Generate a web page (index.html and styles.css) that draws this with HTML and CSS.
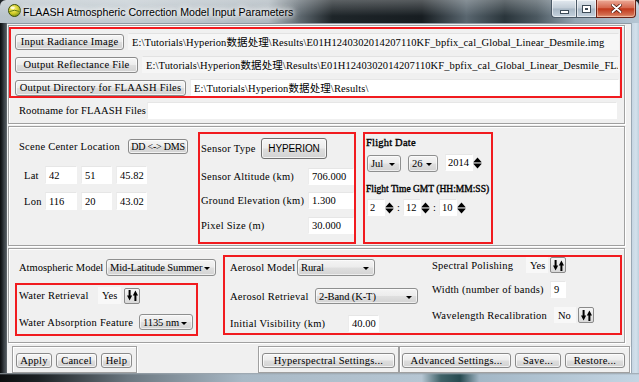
FILE: index.html
```html
<!DOCTYPE html>
<html lang="zh-CN">
<head>
  <meta charset="UTF-8">
  <title>FLAASH Atmospheric Correction Model Input Parameters</title>
  <link rel="stylesheet" href="styles.css">
</head>
<body>
  <div class="window">
    <div class="titlebar">
      <svg class="app-icon" width="13" height="13" viewBox="0 0 13 13">
        <defs>
          <radialGradient id="globe" cx="0.4" cy="0.35" r="0.7">
            <stop offset="0" stop-color="#fbf58a"/>
            <stop offset="0.55" stop-color="#d6cf2a"/>
            <stop offset="1" stop-color="#6f8a14"/>
          </radialGradient>
        </defs>
        <circle cx="6.5" cy="6.5" r="6" fill="url(#globe)" stroke="#3c4f0c" stroke-width="1"/>
        <path d="M1.5 7.5 Q6.5 5 11.5 7.5" fill="none" stroke="#5f7a12" stroke-width="1"/>
        <ellipse cx="4.6" cy="3.8" rx="2.2" ry="1.3" fill="#fff" opacity="0.75"/>
      </svg>
      <span class="title">FLAASH Atmospheric Correction Model Input Parameters</span>
      <div class="caption">
        <span class="cap cap-min"><i class="glyph-min"></i></span>
        <span class="cap cap-max"><i class="glyph-max"></i></span>
        <span class="cap cap-close">
          <svg width="11" height="9" viewBox="0 0 11 9">
            <path d="M1.5 1 L9.5 8 M9.5 1 L1.5 8" stroke="#4a1408" stroke-width="3.4" stroke-linecap="round"/>
            <path d="M1.5 1 L9.5 8 M9.5 1 L1.5 8" stroke="#fff" stroke-width="1.9" stroke-linecap="round"/>
          </svg>
        </span>
      </div>
    </div>

    <div class="frame-left"></div>

    <div class="client">
      <section class="panel panel-files">
        <div class="mark mark-files">
          <div class="file-row">
            <button class="btn btn-input">Input Radiance Image</button>
            <div class="field path readonly">E:\Tutorials\Hyperion数据处理\Results\E01H1240302014207110KF_bpfix_cal_Global_Linear_Desmile.img</div>
          </div>
          <div class="file-row">
            <button class="btn btn-output">Output Reflectance File</button>
            <div class="field path readonly">E:\Tutorials\Hyperion数据处理\Results\E01H1240302014207110KF_bpfix_cal_Global_Linear_Desmile_FLAASH.img</div>
          </div>
          <div class="file-row">
            <button class="btn btn-dir">Output Directory for FLAASH Files</button>
            <div class="field path">E:\Tutorials\Hyperion数据处理\Results\</div>
          </div>
        </div>
        <div class="root-row">
          <span class="lbl root-lbl">Rootname for FLAASH Files</span>
          <div class="field root-field"></div>
        </div>
      </section>

      <section class="panel panel-scene">
        <div class="scene">
          <div class="scene-head">
            <span class="lbl scene-lbl">Scene Center Location</span>
            <button class="btn btn-dms">DD &lt;-&gt; DMS</button>
          </div>
          <div class="coord-row">
            <span class="lbl coord-lbl">Lat</span>
            <div class="field coord wide">42</div>
            <div class="field coord">51</div>
            <div class="field coord">45.82</div>
          </div>
          <div class="coord-row lon">
            <span class="lbl coord-lbl">Lon</span>
            <div class="field coord wide">116</div>
            <div class="field coord">20</div>
            <div class="field coord">43.02</div>
          </div>
        </div>

        <div class="mark mark-sensor">
          <div class="sensor-row type-row">
            <span class="lbl sensor-lbl">Sensor Type</span>
            <button class="btn btn-sensor">HYPERION</button>
          </div>
          <div class="sensor-row alt-row">
            <span class="lbl">Sensor Altitude (km)</span>
            <div class="field num">706.000</div>
          </div>
          <div class="sensor-row elev-row">
            <span class="lbl">Ground Elevation (km)</span>
            <div class="field num">1.300</div>
          </div>
          <div class="sensor-row pixel-row">
            <span class="lbl">Pixel Size (m)</span>
            <div class="field num">30.000</div>
          </div>
        </div>

        <div class="mark mark-flight">
          <div class="flight-title">Flight Date</div>
          <div class="date-row">
            <div class="combo combo-month">Jul</div>
            <div class="combo combo-day">26</div>
            <div class="spin spin-year">
              <span class="field spin-field">2014</span>
              <svg class="spin-arrows" width="9" height="14" viewBox="0 0 9 14"><path d="M0.5 6 L4.5 1.5 L8.5 6 Z M0.5 8 L8.5 8 L4.5 12.5 Z" fill="#000"/><rect x="0.5" y="6.6" width="8" height="0.9" fill="#000"/></svg>
            </div>
          </div>
          <div class="flight-title time-title">Flight Time GMT (HH:MM:SS)</div>
          <div class="time-row">
            <div class="spin">
              <span class="field spin-field">2</span>
              <svg class="spin-arrows" width="9" height="14" viewBox="0 0 9 14"><path d="M0.5 6 L4.5 1.5 L8.5 6 Z M0.5 8 L8.5 8 L4.5 12.5 Z" fill="#000"/><rect x="0.5" y="6.6" width="8" height="0.9" fill="#000"/></svg>
            </div>
            <span class="colon">:</span>
            <div class="spin">
              <span class="field spin-field">12</span>
              <svg class="spin-arrows" width="9" height="14" viewBox="0 0 9 14"><path d="M0.5 6 L4.5 1.5 L8.5 6 Z M0.5 8 L8.5 8 L4.5 12.5 Z" fill="#000"/><rect x="0.5" y="6.6" width="8" height="0.9" fill="#000"/></svg>
            </div>
            <span class="colon">:</span>
            <div class="spin">
              <span class="field spin-field">10</span>
              <svg class="spin-arrows" width="9" height="14" viewBox="0 0 9 14"><path d="M0.5 6 L4.5 1.5 L8.5 6 Z M0.5 8 L8.5 8 L4.5 12.5 Z" fill="#000"/><rect x="0.5" y="6.6" width="8" height="0.9" fill="#000"/></svg>
            </div>
          </div>
        </div>
      </section>

      <section class="panel panel-atmos">
        <div class="atmos-left">
          <div class="atmos-row">
            <span class="lbl atmos-lbl">Atmospheric Model</span>
            <div class="combo combo-model">Mid-Latitude Summer</div>
          </div>
          <div class="mark mark-water">
            <div class="water-row retrieval-row">
              <span class="lbl water-lbl">Water Retrieval</span>
              <div class="flag">Yes</div>
              <button class="toggle">
                <svg width="11" height="11" viewBox="0 0 11 11"><path d="M1.6 0 H3.6 V5.5 H5.2 L2.6 10.5 L0 5.5 H1.6 Z M7.4 11 H9.4 V5.5 H11 L8.4 0.5 L5.8 5.5 H7.4 Z" fill="#000"/></svg>
              </button>
            </div>
            <div class="water-row feature-row">
              <span class="lbl feature-lbl">Water Absorption Feature</span>
              <div class="combo combo-feature">1135 nm</div>
            </div>
          </div>
        </div>

        <div class="mark mark-aerosol">
          <div class="aerosol-col">
            <div class="aero-row model-row">
              <span class="lbl lbl-model">Aerosol Model</span>
              <div class="combo combo-rural">Rural</div>
            </div>
            <div class="aero-row retr-row">
              <span class="lbl lbl-retr">Aerosol Retrieval</span>
              <div class="combo combo-band">2-Band (K-T)</div>
            </div>
            <div class="aero-row vis-row">
              <span class="lbl lbl-vis">Initial Visibility (km)</span>
              <div class="field vis">40.00</div>
            </div>
          </div>
          <div class="aerosol-col polish-col">
            <div class="aero-row polish-row">
              <span class="lbl lbl-polish">Spectral Polishing</span>
              <div class="flag">Yes</div>
              <button class="toggle">
                <svg width="11" height="11" viewBox="0 0 11 11"><path d="M1.6 0 H3.6 V5.5 H5.2 L2.6 10.5 L0 5.5 H1.6 Z M7.4 11 H9.4 V5.5 H11 L8.4 0.5 L5.8 5.5 H7.4 Z" fill="#000"/></svg>
              </button>
            </div>
            <div class="aero-row width-row">
              <span class="lbl lbl-width">Width (number of bands)</span>
              <div class="field bands">9</div>
            </div>
            <div class="aero-row recal-row">
              <span class="lbl lbl-recal">Wavelength Recalibration</span>
              <div class="flag">No</div>
              <button class="toggle">
                <svg width="11" height="11" viewBox="0 0 11 11"><path d="M1.6 0 H3.6 V5.5 H5.2 L2.6 10.5 L0 5.5 H1.6 Z M7.4 11 H9.4 V5.5 H11 L8.4 0.5 L5.8 5.5 H7.4 Z" fill="#000"/></svg>
              </button>
            </div>
          </div>
        </div>
      </section>

      <div class="actions">
        <div class="group group-main">
          <button class="btn btn-apply">Apply</button>
          <button class="btn btn-cancel">Cancel</button>
          <button class="btn btn-help">Help</button>
        </div>
        <div class="group group-hyper">
          <button class="btn btn-hyper">Hyperspectral Settings...</button>
        </div>
        <div class="group group-adv">
          <button class="btn btn-adv">Advanced Settings...</button>
          <button class="btn btn-save">Save...</button>
          <button class="btn btn-restore">Restore...</button>
        </div>
      </div>
    </div>

    <div class="frame-right"></div>
    <div class="frame-bottom"></div>
  </div>
</body>
</html>
```

FILE: styles.css
```css
* {
  box-sizing: border-box;
}
body {
  margin: 0;
  background: #1f2529;
  font-family: "Liberation Serif", "Noto Sans CJK SC", serif;
  font-size: 10.5px;
  color: #000;
}
.window {
  width: 639px;
  height: 382px;
  display: grid;
  grid-template-columns: 7px 624px 8px;
  grid-template-rows: 23px 350px 9px;
  overflow: hidden;
}

/* window chrome */
.titlebar {
  grid-column: 1 / 4;
  display: flex;
  align-items: center;
  padding-left: 8px;
  border-radius: 6px 6px 0 0;
  background:
    linear-gradient(180deg, rgba(255,255,255,0.28), rgba(255,255,255,0) 70%),
    linear-gradient(90deg, #b9c3ca 0, #c3ccd2 20%, #aeb8bf 42%, #5d676e 47%, #1e2529 52%, #171d21 66%, #59666f 73%, #2a353b 79%, #4b5860 84%, #93a4b1 90%, #b5c6d4 100%);
}
.app-icon {
  margin-top: -2px;
}
.title {
  margin-left: 2px;
  font-family: "Liberation Sans", sans-serif;
  font-size: 10.6px;
  color: #000;
  text-shadow: 0 0 4px #fff, 0 0 7px #fff, 0 0 9px rgba(255,255,255,0.8);
}
.caption {
  display: flex;
  margin-left: auto;
  margin-right: 3px;
  align-self: flex-start;
  height: 18px;
}
.cap {
  display: flex;
  align-items: center;
  justify-content: center;
  height: 18px;
  border: 1px solid #4a5966;
  border-top: 0;
}
.cap-min {
  width: 25px;
  border-radius: 0 0 0 4px;
  border-right: 0;
  background: linear-gradient(180deg, #e3eaf0 0, #c1ccd6 48%, #a8b7c4 52%, #c4d2de 100%);
  box-shadow: inset 0 0 0 1px rgba(255,255,255,0.55);
}
.cap-max {
  width: 20px;
  border-right: 0;
  background: linear-gradient(180deg, #e3eaf0 0, #c1ccd6 48%, #a8b7c4 52%, #c4d2de 100%);
  box-shadow: inset 0 0 0 1px rgba(255,255,255,0.55);
}
.cap-close {
  width: 40px;
  border-radius: 0 0 4px 0;
  border-color: #6b2317;
  background: linear-gradient(180deg, #ecaa98 0, #d6694f 45%, #c1381b 52%, #d26a4c 85%, #e49a7a 100%);
  box-shadow: inset 0 0 0 1px rgba(255,220,200,0.5);
}
.glyph-min {
  width: 9px;
  height: 4px;
  margin-top: 6px;
  background: #fff;
  border: 1px solid #3c4b57;
}
.glyph-max {
  width: 9px;
  height: 8px;
  border: 1px solid #3c4b57;
  box-shadow: inset 0 0 0 2px #fff, inset 0 0 0 3px #3c4b57;
  background: #c5d1dc;
}
.frame-left {
  background: linear-gradient(90deg, #0b0d0e 0, #1c2023 2px, #3a4045 4px, #4c5358 6px, #6d7479 7px);
}
.frame-right {
  background: linear-gradient(90deg, #6c7a86 0, #c7d6e3 1px, #d3e1ec 5px, #bfd0de 8px);
}
.frame-bottom {
  grid-column: 1 / 4;
  background:
    linear-gradient(180deg, #9aa4ac 0, rgba(0,0,0,0) 2px),
    linear-gradient(90deg, #0c0e0f 0, #1d2225 6%, #6b7780 20%, #a9b9c6 38%, #b6c6d3 66%, #3f6268 69%, #264a50 72%, #a3b7c6 75%, #c4d5e3 100%);
}
.client {
  background: #f0f0f0;
  padding: 1px 0 0 1px;
  border-top: 1px solid #8e9aa4;
  display: flex;
  flex-direction: column;
}

/* shared widgets */
.panel {
  width: 617px;
  border: 1px solid #a0a0a0;
  box-shadow: inset 1px 1px 0 #fff, 1px 1px 0 #fff;
}
.mark {
  border: 2px solid #f11b1f;
}
.lbl {
  white-space: nowrap;
  line-height: 13px;
  letter-spacing: 0.25px;
}
.btn {
  height: 16px;
  padding: 0;
  font-family: "Liberation Serif", "Noto Sans CJK SC", serif;
  font-size: 10.5px;
  line-height: 13px;
  letter-spacing: 0.25px;
  color: #000;
  white-space: nowrap;
  border: 1px solid #8a8a8a;
  border-radius: 3px;
  background: linear-gradient(180deg, #f6f6f6 0, #ececec 48%, #dedede 52%, #d2d2d2 100%);
  box-shadow: inset 0 0 0 1px rgba(255,255,255,0.7);
}
.field {
  height: 17px;
  padding: 0 3px;
  display: flex;
  align-items: center;
  white-space: nowrap;
  overflow: hidden;
  background: #fff;
  border: 1px solid #fff;
  border-top-color: #e6e6e6;
  border-left-color: #ececec;
}
.combo {
  position: relative;
  height: 17px;
  padding: 0 10px 0 3px;
  display: flex;
  align-items: center;
  white-space: nowrap;
  letter-spacing: -0.1px;
  border: 1px solid #8e8f8f;
  border-radius: 3px;
  background: linear-gradient(180deg, #f4f4f4 0, #ececec 48%, #dfdfdf 52%, #d3d3d3 100%);
  box-shadow: inset 0 0 0 1px rgba(255,255,255,0.6);
}
.combo::after {
  content: "";
  position: absolute;
  right: 5px;
  top: 7px;
  border-left: 3px solid transparent;
  border-right: 3px solid transparent;
  border-top: 3.5px solid #000;
}
.flag {
  height: 17px;
  padding: 0 3px;
  display: flex;
  align-items: center;
  background: #f8f8f8;
  border: 1px solid #f8f8f8;
}
.toggle {
  width: 16px;
  height: 16px;
  padding: 0;
  display: flex;
  align-items: center;
  justify-content: center;
  border: 1px solid #8a8a8a;
  border-radius: 2px;
  background: linear-gradient(180deg, #f6f6f6 0, #e8e8e8 50%, #d8d8d8 100%);
}
.spin {
  display: flex;
  align-items: center;
  width: 27px;
  height: 17px;
}
.spin-field {
  width: 18px;
  padding: 0 2px;
}

/* files panel */
.panel-files {
  height: 99px;
}
.mark-files {
  width: 613px;
  height: 71px;
  margin-top: 1px;
  padding: 4px 1px 0 4px;
  display: flex;
  flex-direction: column;
  gap: 6px;
}
.file-row {
  display: flex;
  align-items: center;
  height: 17px;
}
.btn-input { width: 109px; }
.btn-output { width: 123px; }
.btn-dir { width: 171px; }
.path {
  flex: 1;
  margin-left: 4px;
  letter-spacing: 0.1px;
}
.readonly {
  background: #f6f6f6;
  border-color: #f6f6f6;
  border-top-color: #e2e2e2;
}
.root-row {
  display: flex;
  align-items: center;
  height: 17px;
  margin-top: 4px;
  padding-left: 10px;
}
.root-lbl {
  width: 128px;
  letter-spacing: 0.1px;
}
.root-field {
  width: 470px;
}

/* scene panel */
.panel-scene {
  height: 120px;
  margin-top: 2px;
  display: flex;
  align-items: flex-start;
}
.scene {
  width: 189px;
}
.scene-head {
  display: flex;
  align-items: center;
  margin-top: 12px;
  padding-left: 10px;
}
.scene-lbl {
  width: 109px;
}
.btn-dms {
  width: 60px;
  height: 15px;
  font-size: 10px;
  letter-spacing: -0.2px;
}
.coord-row {
  display: flex;
  align-items: center;
  gap: 4px;
  height: 18px;
  margin-top: 12px;
  padding-left: 15px;
}
.coord-row.lon {
  margin-top: 8px;
}
.coord-lbl {
  width: 17px;
}
.coord {
  width: 31px;
  height: 18px;
}
.coord.wide {
  width: 32px;
}
.mark-sensor {
  width: 158px;
  height: 112px;
  margin-top: 5px;
  padding-left: 1px;
}
.sensor-row {
  display: flex;
  align-items: center;
}
.type-row {
  margin-top: 4px;
}
.sensor-lbl {
  width: 60px;
}
.btn-sensor {
  width: 66px;
  height: 21px;
  font-family: "Liberation Sans", sans-serif;
  font-size: 10px;
  letter-spacing: -0.1px;
  border-color: #707070;
}
.alt-row {
  margin-top: 9px;
}
.elev-row {
  margin-top: 7px;
}
.pixel-row {
  margin-top: 8px;
}
.num {
  width: 46px;
  margin-left: auto;
}
.mark-flight {
  width: 130px;
  height: 112px;
  margin-top: 5px;
  margin-left: 7px;
  padding-left: 1px;
}
.flight-title {
  margin-top: 3px;
  line-height: 12px;
  white-space: nowrap;
  letter-spacing: 0.2px;
  -webkit-text-stroke: 0.35px #000;
}
.flight-title.time-title {
  margin-top: 11px;
  font-size: 9.5px;
  letter-spacing: 0;
}
.date-row {
  display: flex;
  align-items: flex-start;
  gap: 7px;
  margin-top: 5px;
  padding-left: 1px;
}
.combo-month {
  width: 34px;
  margin-top: 1px;
}
.combo-day {
  width: 30px;
  margin-top: 1px;
}
.spin-year {
  width: 37px;
}
.spin-year .spin-field {
  width: 28px;
}
.time-row {
  display: flex;
  align-items: center;
  margin-top: 4px;
  padding-left: 1px;
}
.colon {
  width: 9px;
  text-align: center;
}

/* atmosphere panel */
.panel-atmos {
  height: 95px;
  margin-top: 2px;
  display: flex;
  align-items: flex-start;
}
.atmos-left {
  padding-left: 6px;
}
.atmos-row {
  display: flex;
  align-items: center;
  margin-top: 10px;
  padding-left: 4px;
}
.atmos-lbl {
  width: 87px;
  letter-spacing: 0;
}
.combo-model {
  width: 110px;
}
.mark-water {
  width: 183px;
  height: 53px;
  margin-top: 7px;
  padding: 2px 0 0 2px;
}
.water-row {
  display: flex;
  align-items: center;
}
.water-lbl {
  width: 79px;
}
.retrieval-row .toggle {
  margin-left: 3px;
}
.feature-row {
  margin-top: 10px;
}
.feature-lbl {
  width: 120px;
}
.combo-feature {
  width: 54px;
  height: 16px;
}
.mark-aerosol {
  width: 399px;
  height: 80px;
  margin-top: 6px;
  margin-left: 7px;
  display: flex;
}
.aerosol-col {
  width: 207px;
  padding-left: 5px;
}
.polish-col {
  width: auto;
  padding-left: 0;
}
.aero-row {
  display: flex;
  align-items: center;
}
.model-row {
  margin-top: 2px;
}
.lbl-model {
  width: 67px;
  letter-spacing: 0.15px;
}
.combo-rural {
  width: 78px;
}
.retr-row {
  margin-top: 12px;
}
.lbl-retr {
  width: 85px;
}
.combo-band {
  width: 103px;
  height: 16px;
}
.vis-row {
  margin-top: 11px;
}
.lbl-vis {
  width: 118px;
}
.vis {
  width: 31px;
}
.polish-row .toggle,
.recal-row .toggle {
  margin-left: 2px;
}
.lbl-polish {
  width: 94px;
}
.polish-row .flag,
.recal-row .flag {
  width: 22px;
  height: 16px;
}
.width-row {
  margin-top: 8px;
}
.lbl-width {
  width: 118px;
}
.bands {
  width: 16px;
}
.recal-row {
  margin-top: 9px;
}
.lbl-recal {
  width: 122px;
}

/* bottom buttons */
.actions {
  display: flex;
  height: 27px;
  margin-top: 3px;
  padding-left: 4px;
}
.group {
  display: flex;
  gap: 4px;
  padding: 6px 0 0 3px;
  border: 1px solid #a0a0a0;
  box-shadow: inset 1px 1px 0 #fff, 1px 1px 0 #fff;
}
.group .btn {
  height: 15px;
}
.group-main {
  width: 125px;
}
.btn-apply { width: 36px; }
.btn-cancel { width: 41px; }
.btn-help { width: 31px; }
.group-hyper {
  width: 141px;
  margin-left: auto;
}
.btn-hyper { width: 133px; }
.group-adv {
  width: 231px;
  margin-right: 1px;
  padding-left: 2px;
}
.btn-adv { width: 109px; }
.btn-save { width: 46px; }
.btn-restore { width: 60px; }
```
